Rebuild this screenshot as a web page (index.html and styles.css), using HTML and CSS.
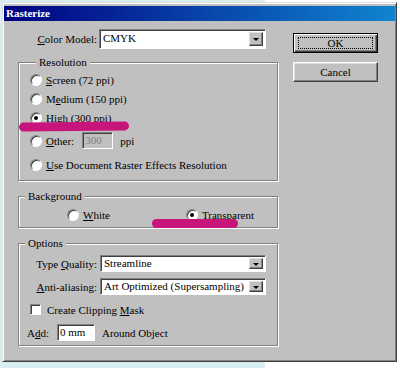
FILE: index.html
```html
<!DOCTYPE html>
<html lang="en">
<head>
    <meta charset="UTF-8">
    <title>Rasterize</title>
    <link rel="stylesheet" href="styles.css">
</head>
<body>
    <div class="dialog">
        <div class="titlebar">Rasterize</div>
        <div class="content">
            <div class="main">
                <div class="top-row">
                    <span class="lbl"><u>C</u>olor Model:</span>
                    <div class="select tall">
                        <span class="value">CMYK</span>
                        <span class="drop"></span>
                    </div>
                </div>

                <!-- Resolution -->
                <fieldset class="group res">
                    <legend>Resolution</legend>
                    <div class="opt"><span class="radio"></span><span><u>S</u>creen (72 ppi)</span></div>
                    <div class="opt"><span class="radio"></span><span>M<u>e</u>dium (150 ppi)</span></div>
                    <div class="opt"><span class="radio on"></span><span><u>H</u>igh (300 ppi)</span></div>
                    <div class="opt other">
                        <span class="radio"></span><span><u>O</u>ther:</span>
                        <span class="num disabled">300</span>
                        <span class="unit">ppi</span>
                    </div>
                    <div class="opt last"><span class="radio"></span><span><u>U</u>se Document Raster Effects Resolution</span></div>
                </fieldset>

                <!-- Background -->
                <fieldset class="group bg">
                    <legend>Background</legend>
                    <div class="bg-row">
                        <div class="opt white"><span class="radio"></span><span><u>W</u>hite</span></div>
                        <div class="opt trans"><span class="radio on"></span><span><u>T</u>ransparent</span></div>
                    </div>
                </fieldset>

                <!-- Options -->
                <fieldset class="group opts">
                    <legend>Options</legend>
                    <div class="orow">
                        <span class="olbl">Type <u>Q</u>uality:</span>
                        <div class="select">
                            <span class="value">Streamline</span>
                            <span class="drop"></span>
                        </div>
                    </div>
                    <div class="orow">
                        <span class="olbl"><u>A</u>nti-aliasing:</span>
                        <div class="select">
                            <span class="value">Art Optimized (Supersampling)</span>
                            <span class="drop"></span>
                        </div>
                    </div>
                    <div class="orow check">
                        <span class="box"></span><span>Create Clipping <u>M</u>ask</span>
                    </div>
                    <div class="orow add">
                        <span>A<u>d</u>d:</span>
                        <span class="num wide">0 mm</span>
                        <span class="unit">Around Object</span>
                    </div>
                </fieldset>
            </div>

            <div class="side">
                <button class="btn default"><span>OK</span></button>
                <button class="btn"><span>Cancel</span></button>
            </div>
        </div>

        <span class="mark m1"></span>
        <span class="mark m2"></span>
    </div>
</body>
</html>
```

FILE: styles.css
```css
body {
    margin: 0;
    padding: 2px 0 0 2px;
    height: 366px;
    background: linear-gradient(to right, #d9eef2 265px, #ffffff 265px);
    font-family: "Liberation Serif", "Times New Roman", Tinos, "Noto Serif", "DejaVu Serif", serif;
    font-size: 11px;
    color: #000;
}

.dialog {
    position: relative;
    width: 391px;
    height: 356px;
    padding: 1px;
    background: #c0c0c0;
    border: 1px solid;
    border-color: #dfdfdf #404040 #404040 #dfdfdf;
    box-shadow: inset 1px 1px #fff, inset -1px -1px #808080;
}

.titlebar {
    margin-top: 2px;
    height: 15px;
    line-height: 15px;
    padding-left: 2px;
    background: linear-gradient(to right, #000080, #1084d0);
    color: #fff;
    font-weight: bold;
}

.content {
    display: flex;
    padding-left: 14px;
}

.main {
    width: 260px;
}

.top-row {
    display: flex;
    align-items: center;
    margin-top: 8px;
}

.lbl {
    width: 79px;
    text-align: right;
    margin-right: 2px;
}

/* drop down list */
.select {
    display: flex;
    width: 161px;
    height: 13px;
    padding: 2px;
    background: #fff;
    border: 1px solid;
    border-color: #808080 #fff #fff #808080;
    box-shadow: inset 1px 1px #404040;
}

.select.tall {
    height: 14px;
}

.select .value {
    flex: 1;
    line-height: 13px;
    padding-left: 1px;
    white-space: nowrap;
}

.drop {
    position: relative;
    width: 12px;
    background: #c0c0c0;
    border: 1px solid;
    border-color: #dfdfdf #404040 #404040 #dfdfdf;
    box-shadow: inset -1px -1px #808080;
}

.drop::after {
    content: "";
    position: absolute;
    left: 3px;
    top: 5px;
    border-left: 3px solid transparent;
    border-right: 3px solid transparent;
    border-top: 3px solid #000;
}

/* group boxes */
.group {
    margin: 0;
    padding: 0;
    border: 1px solid #808080;
    box-shadow: inset 1px 1px #fff, 1px 1px #fff;
}

.group legend {
    margin-left: 6px;
    padding: 0 3px;
    line-height: 13px;
    background: #c0c0c0;
}

.res {
    margin-top: 7px;
    padding: 1px 0 6px 11px;
}

.opt {
    display: flex;
    align-items: center;
    height: 19px;
}

.opt.other {
    margin-top: 4px;
}

.opt.last {
    margin-top: 5px;
}

.radio {
    position: relative;
    width: 10px;
    height: 10px;
    margin-right: 4px;
    border-radius: 50%;
    background: #fff;
    border: 1px solid;
    border-color: #808080 #fff #fff #808080;
    box-shadow: inset 1px 1px #404040;
}

.radio.on::after {
    content: "";
    position: absolute;
    left: 3px;
    top: 3px;
    width: 4px;
    height: 4px;
    border-radius: 50%;
    background: #000;
}

.num {
    width: 27px;
    height: 15px;
    line-height: 15px;
    padding-left: 2px;
    margin-left: 8px;
    background: #fff;
    border: 1px solid;
    border-color: #808080 #fff #fff #808080;
    box-shadow: inset 1px 1px #404040;
}

.num.disabled {
    background: #c0c0c0;
    color: #808080;
}

.unit {
    margin-left: 7px;
}

.bg {
    margin-top: 9px;
    padding: 2px 0 3px 0;
}

.bg-row {
    display: flex;
}

.opt.white {
    margin-left: 48px;
}

.opt.trans {
    margin-left: 76px;
}

.opts {
    margin-top: 9px;
    padding: 4px 0 3px 0;
}

.orow {
    display: flex;
    align-items: center;
    height: 19px;
    margin-bottom: 4px;
}

.olbl {
    width: 78px;
    text-align: right;
    margin-right: 3px;
}

.orow .select {
    height: 11px;
    width: 160px;
}

.orow .select .value {
    line-height: 11px;
}

.orow .drop::after {
    top: 4px;
}

.orow.check {
    padding-left: 11px;
}

.box {
    width: 9px;
    height: 9px;
    margin-right: 6px;
    background: #fff;
    border: 1px solid;
    border-color: #808080 #fff #fff #808080;
    box-shadow: inset 1px 1px #404040;
}

.orow.add {
    padding-left: 8px;
    margin-bottom: 0;
}

.num.wide {
    width: 34px;
    height: 15px;
    margin-left: 8px;
}

/* buttons */
.side {
    display: flex;
    flex-direction: column;
    gap: 9px;
    margin-left: 15px;
    padding-top: 12px;
}

.btn {
    width: 85px;
    height: 20px;
    padding: 0;
    font: inherit;
    color: #000;
    background: #c0c0c0;
    border: 1px solid;
    border-color: #fff #404040 #404040 #fff;
    box-shadow: inset -1px -1px #808080, inset 1px 1px #dfdfdf;
}

.btn.default {
    border: 1px solid #000;
    box-shadow: inset 1px 1px #fff, inset -1px -1px #404040, inset -2px -2px #808080;
}

.btn.default span {
    display: block;
    margin: 3px 4px;
    line-height: 10px;
    border: 1px dotted #000;
}

/* hand drawn highlight strokes */
.mark {
    position: absolute;
    height: 9px;
    background: #c8157b;
    border-radius: 5px;
}

.m1 {
    left: 16px;
    top: 119px;
    width: 110px;
    transform: rotate(-0.6deg);
}

.m2 {
    left: 149px;
    top: 216px;
    width: 86px;
}
```
